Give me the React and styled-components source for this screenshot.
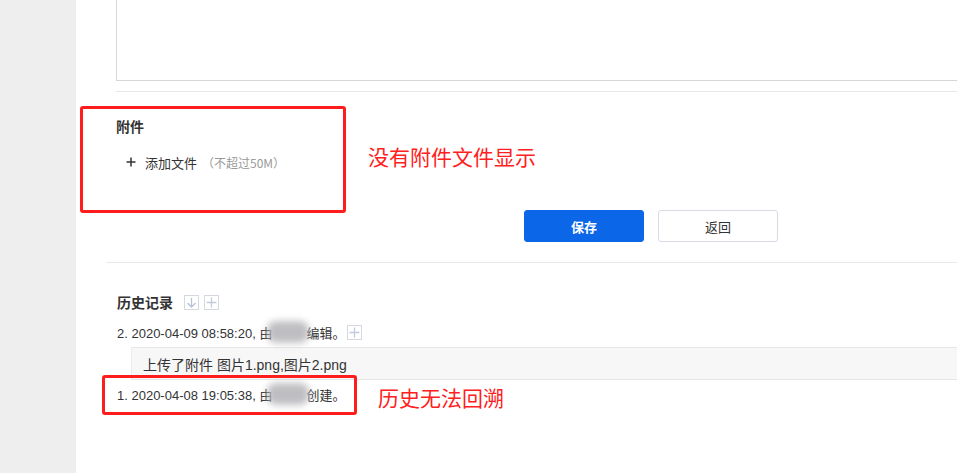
import React from 'react';
import styled, { createGlobalStyle } from 'styled-components';

const GlobalStyle = createGlobalStyle`
  html, body {
    margin: 0;
    padding: 0;
    background: #fff;
  }
  body {
    font-family: "Liberation Sans", "Noto Sans CJK SC", sans-serif;
    color: #333;
    overflow: hidden;
  }
`;

const Page = styled.div`
  display: flex;
  height: 473px;
`;

const Sidebar = styled.div`
  width: 76px;
  flex-shrink: 0;
  background: #eeeeee;
`;

const Main = styled.div`
  flex: 1;
  overflow: hidden;
  background: #fff;
`;

const FormSection = styled.div`
  padding-left: 40px;
`;

const TextBox = styled.div`
  height: 80px;
  width: calc(100% + 20px);
  border-left: 1px solid #d6d6d6;
  border-bottom: 1px solid #d6d6d6;
`;

const Divider = styled.div`
  height: 1px;
  background: #e8e8e8;
  margin-top: ${p => p.$top}px;
  margin-left: ${p => p.$left || 0}px;
`;

const Annotated = styled.div`
  position: relative;
  margin-top: ${p => p.$top}px;
`;

const RedBox = styled.div`
  position: absolute;
  left: ${p => p.$x}px;
  top: ${p => p.$y}px;
  width: ${p => p.$w}px;
  height: ${p => p.$h}px;
  border: 3px solid #ff1c1c;
  border-radius: 3px;
  box-sizing: border-box;
  pointer-events: none;
`;

const Note = styled.div`
  position: absolute;
  left: ${p => p.$x}px;
  top: ${p => p.$y}px;
  font-family: "Noto Sans CJK SC", sans-serif;
  font-size: 21px;
  line-height: 28px;
  color: #ff2020;
  white-space: nowrap;
`;

const Heading = styled.div`
  font-family: "Noto Sans CJK SC", sans-serif;
  font-size: 14px;
  font-weight: 700;
  line-height: 20px;
  color: #333;
`;

const AddRow = styled.div`
  display: flex;
  align-items: center;
  gap: 9px;
  margin-top: 16px;
  padding-left: 10px;
  height: 20px;
`;

const AddLabel = styled.span`
  font-family: "Noto Sans CJK SC", sans-serif;
  font-size: 13px;
  color: #333;
`;

const Hint = styled.span`
  font-family: "Noto Sans CJK SC", sans-serif;
  font-size: 12px;
  color: #999;
  margin-left: -4px;
`;

const ButtonRow = styled.div`
  display: flex;
  gap: 14px;
  margin-top: 38px;
  padding-left: 408px;
`;

const Button = styled.button`
  width: 120px;
  height: 32px;
  border-radius: 3px;
  font-family: "Noto Sans CJK SC", sans-serif;
  font-size: 13px;
  cursor: pointer;
  border: 1px solid ${p => (p.$primary ? '#0b66e8' : '#d8dbe6')};
  background: ${p => (p.$primary ? '#0b66e8' : '#fff')};
  color: ${p => (p.$primary ? '#fff' : '#333')};
  font-weight: ${p => (p.$primary ? 700 : 400)};
`;

const HistorySection = styled.div`
  padding-left: 41px;
`;

const TitleRow = styled.div`
  display: flex;
  align-items: center;
  gap: 5px;
  margin-top: 29px;
  height: 20px;
`;

const IconBox = styled.span`
  display: inline-flex;
  align-items: center;
  justify-content: center;
  width: 15px;
  height: 15px;
  box-sizing: border-box;
  border: 1px solid #d5d8e0;
  margin-left: ${p => p.$gap || 0}px;
`;

const Entry = styled.div`
  display: flex;
  align-items: center;
  height: 20px;
  font-size: 13px;
  color: #333;
  margin-top: ${p => p.$top}px;
  white-space: nowrap;
`;

const Blur = styled.span`
  display: inline-block;
  width: 42px;
  height: 22px;
  margin: 0 -3px 0 -5px;
  background: #b8b8bc;
  border-radius: 9px;
  filter: blur(3.5px);
  opacity: 0.9;
`;

const Detail = styled.div`
  margin-top: 5px;
  margin-left: 14px;
  height: 31px;
  display: flex;
  align-items: center;
  padding-left: 11px;
  background: #f7f7f7;
  border-top: 1px solid #e6e6e6;
  border-bottom: 1px solid #e6e6e6;
  border-left: 1px solid #ececec;
  font-size: 14px;
  color: #333;
  font-family: "Liberation Sans", "Noto Sans CJK SC", sans-serif;
`;

const PlusIcon = ({ size = 10, color = '#333', width = 1.5 }) => (
  <svg width={size} height={size} viewBox="0 0 10 10">
    <path d="M5 0.5V9.5M0.5 5H9.5" stroke={color} strokeWidth={width} fill="none" />
  </svg>
);

const DownIcon = () => (
  <svg width="11" height="11" viewBox="0 0 11 11">
    <path d="M5.5 1V10M1.5 6L5.5 10L9.5 6" stroke="#b9c3d6" strokeWidth="1.3" fill="none" />
  </svg>
);

export default function App() {
  return (
    <>
      <GlobalStyle />
      <Page>
        <Sidebar />
        <Main>
          <FormSection>
            <TextBox />
            <Divider $top={10} />
            <Annotated $top={24}>
              <RedBox $x={-36} $y={-10} $w={266} $h={107} />
              <Note $x={252} $y={26}>没有附件文件显示</Note>
              <Heading>附件</Heading>
              <AddRow>
                <PlusIcon />
                <AddLabel>添加文件</AddLabel>
                <Hint>（不超过50M）</Hint>
              </AddRow>
            </Annotated>
            <ButtonRow>
              <Button $primary>保存</Button>
              <Button>返回</Button>
            </ButtonRow>
          </FormSection>
          <Divider $top={20} $left={30} />
          <HistorySection>
            <TitleRow>
              <Heading>历史记录</Heading>
              <IconBox $gap={6}><DownIcon /></IconBox>
              <IconBox><PlusIcon size={11} color="#c3cadb" width={1.2} /></IconBox>
            </TitleRow>
            <Entry $top={10}>
              2. 2020-04-09 08:58:20, 由<Blur />编辑。
              <IconBox $gap={2}><PlusIcon size={11} color="#c3cadb" width={1.2} /></IconBox>
            </Entry>
            <Detail>上传了附件 图片1.png,图片2.png</Detail>
            <Annotated $top={4}>
              <RedBox $x={-15} $y={-9} $w={255} $h={40} />
              <Note $x={261} $y={-1}>历史无法回溯</Note>
              <Entry $top={0}>
                1. 2020-04-08 19:05:38, 由<Blur />创建。
              </Entry>
            </Annotated>
          </HistorySection>
        </Main>
      </Page>
    </>
  );
}
